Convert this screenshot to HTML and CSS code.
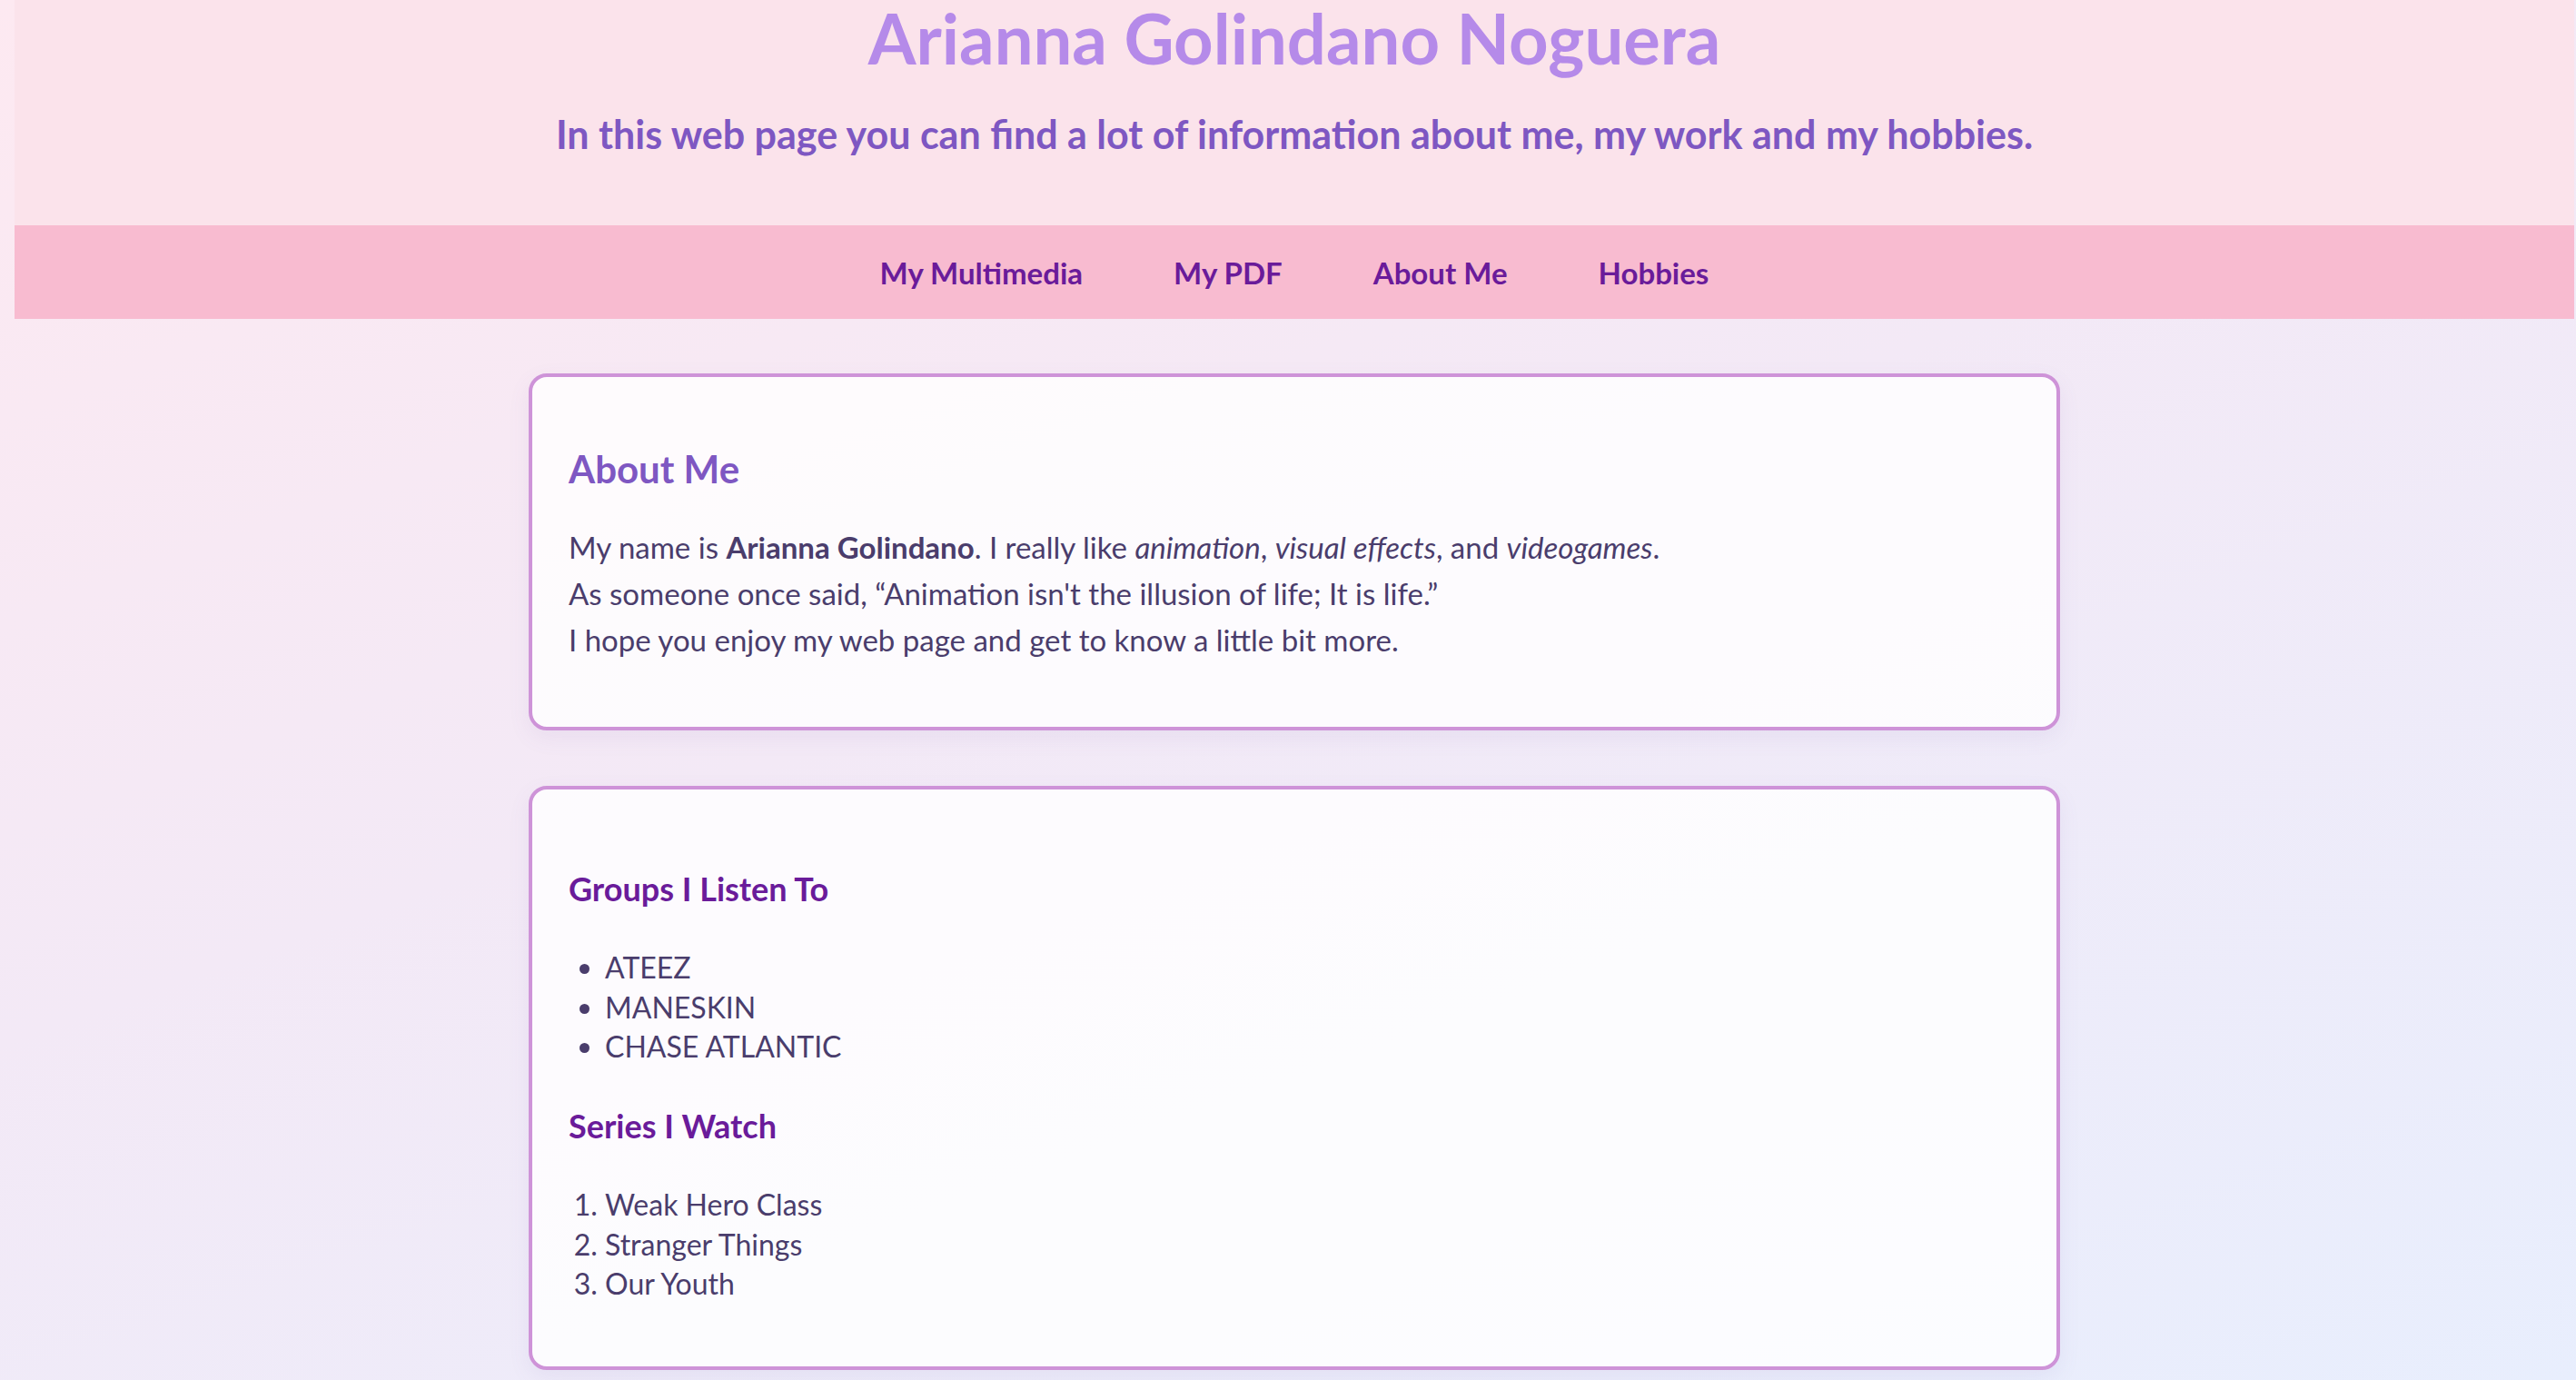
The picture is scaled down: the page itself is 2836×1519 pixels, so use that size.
FILE: index.html
```html
<!DOCTYPE html>
<html lang="en">
<head>
<meta charset="utf-8">
<title>Arianna Golindano Noguera</title>
<link rel="stylesheet" href="styles.css">
</head>
<body>
<header class="site-header">
  <h1 class="site-title">Arianna Golindano Noguera</h1>
  <p class="site-subtitle">In this web page you can find a lot of information about me, my work and my hobbies.</p>
</header>
<nav class="site-nav">
  <a class="nav-link" href="#">My Multimedia</a>
  <a class="nav-link" href="#">My PDF</a>
  <a class="nav-link" href="#">About Me</a>
  <a class="nav-link" href="#">Hobbies</a>
</nav>
<main class="content">
  <section class="card card-about">
    <h2 class="card-title">About Me</h2>
    <p class="about-text">My name is <strong>Arianna Golindano</strong>. I really like <em>animation</em>, <em>visual effects</em>, and <em>videogames</em>.<br>As someone once said, “Animation isn't the illusion of life; It is life.”<br>I hope you enjoy my web page and get to know a little bit more.</p>
  </section>
  <section class="card card-hobbies">
    <h3 class="list-title list-title-first">Groups I Listen To</h3>
    <ul class="item-list">
      <li>ATEEZ</li>
      <li>MANESKIN</li>
      <li>CHASE ATLANTIC</li>
    </ul>
    <h3 class="list-title">Series I Watch</h3>
    <ol class="item-list item-list-last">
      <li>Weak Hero Class</li>
      <li>Stranger Things</li>
      <li>Our Youth</li>
    </ol>
  </section>
</main>
</body>
</html>
```
FILE: styles.css
```css
html {
  min-height: 100%;
  background: linear-gradient(160deg, #fde9f1 0%, #f3e9f6 45%, #e8eefd 100%);
}

body {
  margin: 0 2px 0 16px;
  min-height: 1519px;
  font-family: Lato, "Noto Sans", "Open Sans", sans-serif;
  font-size: 32px;
  color: #4a3d6c;
}

.site-header {
  background: #fbe3eb;
  text-align: center;
  padding: 0 0 75px;
}

.site-title {
  margin: 0;
  font-size: 76px;
  line-height: 1.1;
  font-weight: 700;
  color: #b58ae9;
}

.site-subtitle {
  margin: 38px 0 0;
  font-size: 43px;
  line-height: 1.2;
  font-weight: 700;
  color: #7e57c2;
}

.site-nav {
  background: #f8bbd0;
  display: flex;
  justify-content: center;
  gap: 100px;
  padding: 33px 0 32px;
  line-height: 38px;
}

.nav-link {
  color: #6a1b9a;
  text-decoration: none;
  font-weight: 700;
  font-size: 33px;
}

.content {
  display: flex;
  flex-direction: column;
  align-items: center;
  gap: 61px;
  padding: 60px 0 0;
}

.card {
  box-sizing: border-box;
  width: 1686px;
  padding: 40px;
  border: 4px solid #ce93d8;
  border-radius: 20px;
  background: rgba(255, 255, 255, 0.82);
  box-shadow: 0 8px 24px rgba(120, 90, 160, 0.08);
}

.card-title {
  margin: 36px 0 35px;
  font-size: 42px;
  line-height: 1.2;
  font-weight: 700;
  color: #7e57c2;
}

.about-text {
  margin: 0 0 30px;
  font-size: 33px;
  line-height: 51.2px;
}

.about-text strong {
  font-weight: 700;
}

.list-title {
  margin: 45px 0 43px;
  font-size: 36px;
  line-height: 1.2;
  font-weight: 700;
  color: #6a1b9a;
}

.list-title-first {
  margin-top: 48px;
}

.item-list {
  margin: 0;
  padding-left: 40px;
  line-height: 43.3px;
}

.item-list-last {
  margin-bottom: 30px;
}
```
